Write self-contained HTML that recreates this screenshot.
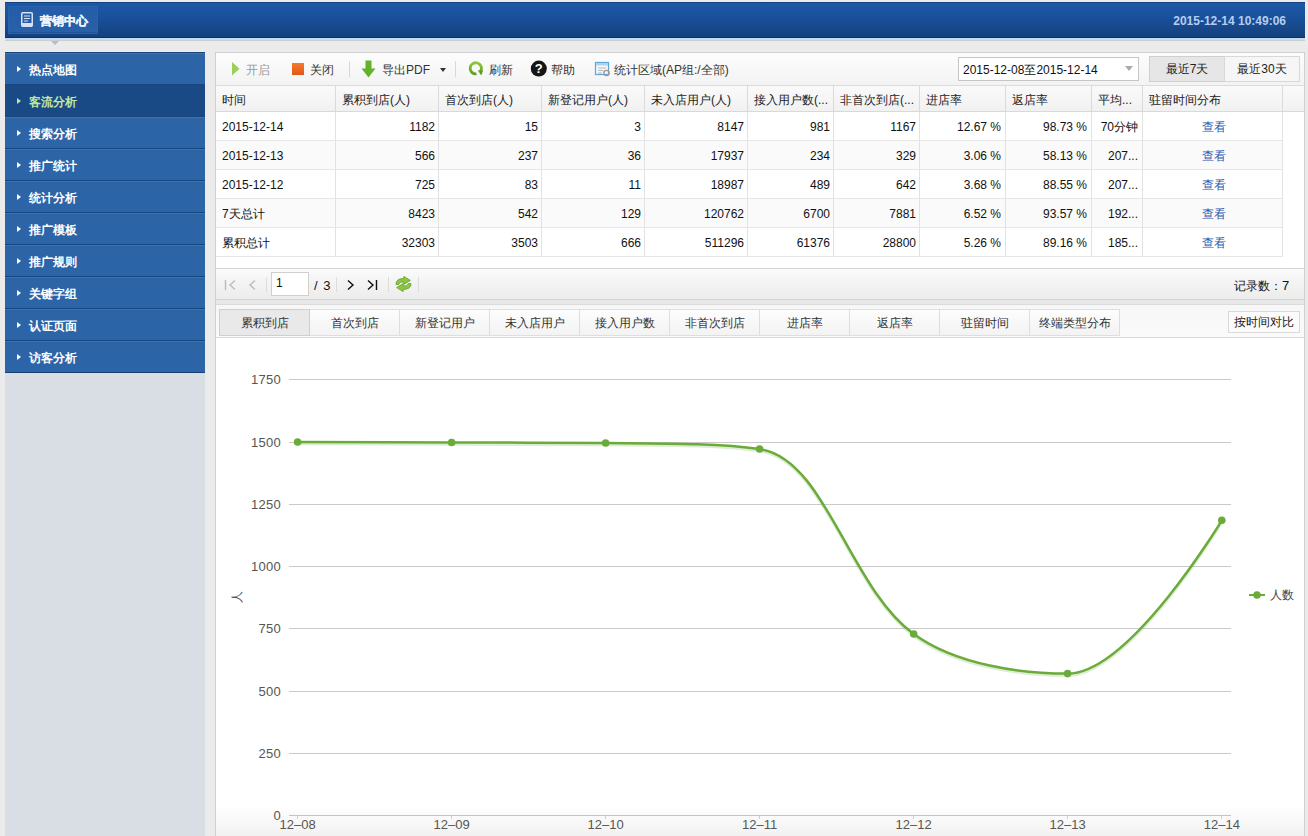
<!DOCTYPE html>
<html><head><meta charset="utf-8">
<style>
*{box-sizing:border-box;margin:0;padding:0}
html,body{width:1308px;height:836px;overflow:hidden;background:#ebebeb;font-family:"Liberation Sans",sans-serif;font-size:12px;color:#222}
.abs{position:absolute}
#hdr{left:5px;top:2px;width:1300px;height:36px;background:linear-gradient(#1c58a6,#1a519c 40%,#15427f 95%);border-top:1px solid #104280;border-bottom:1px solid #0e2f66}
#hdrline{left:5px;top:38px;width:1300px;height:3px;background:linear-gradient(#c6dbf0 0,#c6dbf0 1.5px,#b7c2c8 2px,#d8dcdf)}
#harr{left:51px;top:41px;width:0;height:0;border-top:4px solid #b5bcc4;border-left:4px solid transparent;border-right:4px solid transparent}
#logo{left:8px;top:6px;width:90px;height:28px;background:linear-gradient(#245ca8,#2a60a8);border:1px solid #2b62ad;box-shadow:inset 0 -1px 0 #1f5298}
#logo .t{position:absolute;left:31px;top:6px;color:#eef3fb;font-weight:bold;font-size:12px;letter-spacing:0px;-webkit-text-stroke:0.35px #eef3fb}
#time{right:22px;top:14px;color:#b5cdf0;font-weight:bold;font-size:12px}
#side{left:5px;top:52px;width:200px;height:784px;background:#d9dee5}
.nav{position:absolute;left:0;width:200px;height:32px;background:linear-gradient(#2d64a6,#2b65a8);border-top:1px solid #184680;box-shadow:inset 0 1px 0 #3b72b3;color:#fff;font-weight:bold;font-size:12px}
.nav .tri{position:absolute;left:12px;top:13px;width:0;height:0;border-left:4px solid #fff;border-top:3px solid transparent;border-bottom:3px solid transparent}
.nav span{position:absolute;left:24px;top:9px}
.nav.act{background:#1a4a86;color:#bfe6a2;box-shadow:none}
.nav.act .tri{border-left-color:#bfe6a2}
#panel{left:215px;top:52px;width:1090px;height:790px;background:#fff;border:1px solid #cfcfcf}

#tb{left:216px;top:53px;width:1088px;height:33px;background:linear-gradient(#fdfdfd,#f3f3f3);border-bottom:1px solid #dcdcdc}
.tbt{position:absolute;top:10px;font-size:12px;color:#333;white-space:nowrap}
.sep{position:absolute;width:1px;background:#d8d8d8}
#dd{left:958px;top:57px;width:181px;height:24px;border:1px solid #c6c6c6;background:#fff}
#dd span{position:absolute;left:4px;top:4px;color:#111}
#dd i{position:absolute;right:5px;top:8px;border-top:5px solid #aaa;border-left:4px solid transparent;border-right:4px solid transparent}
.btn{position:absolute;top:56px;height:26px;border:1px solid #d8d8d8;background:#f6f6f6;text-align:center;line-height:25px;color:#222}
#thd{left:216px;top:86px;width:1088px;height:26px;background:linear-gradient(#fafafa,#f1f1f1);border-bottom:1px solid #d9d9d9}
.th{position:absolute;top:0;height:25px;line-height:28px;padding-left:6px;border-right:1px solid #dadada;color:#222;white-space:nowrap;overflow:hidden}
.row{position:absolute;left:216px;width:1067px;height:29px;border-bottom:1px solid #e6e6e6}
.td{position:absolute;top:0;height:28px;line-height:31px;border-right:1px solid #e2e2e2;white-space:nowrap;text-align:right;padding-right:3px;color:#111}
.td.l{text-align:left;padding-left:6px}
.td.c{text-align:center;color:#2a58b0;padding-left:5px}
#pg{left:216px;top:268px;width:1088px;height:32px;background:linear-gradient(#fafafa,#ececec);border-top:1px solid #d6d6d6;border-bottom:1px solid #d4d4d4}
#tabs{left:216px;top:300px;width:1088px;height:38px;background:linear-gradient(#e8e8e8 0,#e8e8e8 4px,#dadada 4px,#dadada 5px,#f7f7f7 5px,#fafafa);border-bottom:1px solid #d8d8d8}
.tab{position:absolute;top:309px;width:90px;height:27px;border:1px solid #dedede;border-left:none;background:linear-gradient(#fdfdfd,#f3f3f3);text-align:center;line-height:26px;color:#333}
.tab.act{background:#e9e9e9;border-left:1px solid #cfcfcf;border-color:#cfcfcf}
</style></head><body>
<div id="hdr" class="abs"></div>
<div id="hdrline" class="abs"></div><div id="harr" class="abs"></div>
<div id="logo" class="abs"><svg class="abs" style="left:12px;top:5px" width="12" height="15" viewBox="0 0 12 15"><rect x="0.75" y="0.75" width="10.5" height="13.5" rx="1" fill="none" stroke="#d6e2f4" stroke-width="1.5"/><path d="M3 4h6M3 6.5h6M3 9h4" stroke="#d6e2f4" stroke-width="1.2"/><rect x="0.75" y="11" width="10.5" height="3.2" fill="#d6e2f4"/></svg><span class="t">营销中心</span></div>
<div id="time" class="abs">2015-12-14 10:49:06</div>
<div id="side" class="abs">
<div class="nav" style="top:0"><i class="tri"></i><span>热点地图</span></div>
<div class="nav act" style="top:32px"><i class="tri"></i><span>客流分析</span></div>
<div class="nav" style="top:64px"><i class="tri"></i><span>搜索分析</span></div>
<div class="nav" style="top:96px"><i class="tri"></i><span>推广统计</span></div>
<div class="nav" style="top:128px"><i class="tri"></i><span>统计分析</span></div>
<div class="nav" style="top:160px"><i class="tri"></i><span>推广模板</span></div>
<div class="nav" style="top:192px"><i class="tri"></i><span>推广规则</span></div>
<div class="nav" style="top:224px"><i class="tri"></i><span>关键字组</span></div>
<div class="nav" style="top:256px"><i class="tri"></i><span>认证页面</span></div>
<div class="nav" style="top:288px;height:33px;border-bottom:1px solid #1a3f72"><i class="tri"></i><span>访客分析</span></div>
</div>
<div id="panel" class="abs"></div>
<!--CONTENT-->
<div id="tb" class="abs"></div>

<svg class="abs" style="left:232px;top:62px" width="9" height="14"><path d="M0 0L7.5 6.8L0 13.6Z" fill="#9ccf5a"/></svg>
<span class="tbt abs" style="left:246px;top:62px;color:#999">开启</span>
<div class="abs" style="left:292px;top:63px;width:12px;height:12px;background:linear-gradient(#f47a2a,#e2561a)"></div>
<span class="tbt abs" style="left:310px;top:62px">关闭</span>
<div class="sep" style="left:349px;top:61px;height:16px"></div>
<svg class="abs" style="left:361px;top:60px" width="15" height="18"><path d="M4.5 0.5h6v8h4L7.5 17.5L0.5 8.5h4z" fill="#63b22a"/></svg>
<span class="tbt abs" style="left:382px;top:62px">导出PDF</span>
<div class="abs" style="left:440px;top:68px;border-top:4px solid #333;border-left:3px solid transparent;border-right:3px solid transparent"></div>
<div class="sep" style="left:455px;top:61px;height:16px"></div>
<svg class="abs" style="left:468px;top:61px" width="16" height="15" viewBox="0 0 16 15"><defs><linearGradient id="gr" x1="0" y1="0" x2="0" y2="1"><stop offset="0" stop-color="#8cc83e"/><stop offset="1" stop-color="#5c9f22"/></linearGradient></defs><path d="M12.6 10.2A5.6 5.6 0 1 0 8.5 12.9" fill="none" stroke="url(#gr)" stroke-width="2.8"/><path d="M9.8 9.3L15.2 9.6L13.2 14.6z" fill="#5c9f22"/></svg>
<span class="tbt abs" style="left:489px;top:62px">刷新</span>
<svg class="abs" style="left:530px;top:60px" width="18" height="18"><circle cx="8.8" cy="8.6" r="8" fill="#151515"/><text x="8.8" y="13.2" font-size="13" font-weight="bold" text-anchor="middle" fill="#fff" font-family="Liberation Sans">?</text></svg>
<span class="tbt abs" style="left:551px;top:62px">帮助</span>
<svg class="abs" style="left:594px;top:61px" width="17" height="16"><rect x="1.5" y="1.5" width="13" height="12" fill="#f4f8fb" stroke="#5ea5d8" stroke-width="1.2"/><rect x="2" y="2" width="12" height="2.5" fill="#a9d3f0"/><path d="M4 7h8M4 9.5h5M4 12h4" stroke="#b8b8b8" stroke-width="1"/><circle cx="12.5" cy="12" r="2.6" fill="none" stroke="#999" stroke-width="1.4"/></svg>
<span class="tbt abs" style="left:614px;top:62px">统计区域(AP组:/全部)</span>
<div id="dd" class="abs"><span>2015-12-08至2015-12-14</span><i></i></div>
<div class="btn" style="left:1149px;width:76px;background:#e6e6e6;border-color:#cfcfcf">最近7天</div>
<div class="btn" style="left:1224px;width:76px">最近30天</div>

<div id="thd" class="abs">
<div class="th" style="left:0px;width:120px">时间</div>
<div class="th" style="left:120px;width:103px">累积到店(人)</div>
<div class="th" style="left:223px;width:103px">首次到店(人)</div>
<div class="th" style="left:326px;width:103px">新登记用户(人)</div>
<div class="th" style="left:429px;width:103px">未入店用户(人)</div>
<div class="th" style="left:532px;width:86px">接入用户数(...</div>
<div class="th" style="left:618px;width:86px">非首次到店(...</div>
<div class="th" style="left:704px;width:86px">进店率</div>
<div class="th" style="left:790px;width:86px">返店率</div>
<div class="th" style="left:876px;width:51px">平均...</div>
<div class="th" style="left:927px;width:140px">驻留时间分布</div>
</div>
<div class="row" style="top:112px;background:#fff">
<div class="td l" style="left:0px;width:120px">2015-12-14</div>
<div class="td" style="left:120px;width:103px">1182</div>
<div class="td" style="left:223px;width:103px">15</div>
<div class="td" style="left:326px;width:103px">3</div>
<div class="td" style="left:429px;width:103px">8147</div>
<div class="td" style="left:532px;width:86px">981</div>
<div class="td" style="left:618px;width:86px">1167</div>
<div class="td" style="left:704px;width:86px;padding-right:4px">12.67 %</div>
<div class="td" style="left:790px;width:86px;padding-right:4px">98.73 %</div>
<div class="td" style="left:876px;width:51px;padding-right:4px">70分钟</div>
<div class="td c" style="left:927px;width:140px">查看</div>
</div>
<div class="row" style="top:141px;background:#fafafa">
<div class="td l" style="left:0px;width:120px">2015-12-13</div>
<div class="td" style="left:120px;width:103px">566</div>
<div class="td" style="left:223px;width:103px">237</div>
<div class="td" style="left:326px;width:103px">36</div>
<div class="td" style="left:429px;width:103px">17937</div>
<div class="td" style="left:532px;width:86px">234</div>
<div class="td" style="left:618px;width:86px">329</div>
<div class="td" style="left:704px;width:86px;padding-right:4px">3.06 %</div>
<div class="td" style="left:790px;width:86px;padding-right:4px">58.13 %</div>
<div class="td" style="left:876px;width:51px;padding-right:4px">207...</div>
<div class="td c" style="left:927px;width:140px">查看</div>
</div>
<div class="row" style="top:170px;background:#fff">
<div class="td l" style="left:0px;width:120px">2015-12-12</div>
<div class="td" style="left:120px;width:103px">725</div>
<div class="td" style="left:223px;width:103px">83</div>
<div class="td" style="left:326px;width:103px">11</div>
<div class="td" style="left:429px;width:103px">18987</div>
<div class="td" style="left:532px;width:86px">489</div>
<div class="td" style="left:618px;width:86px">642</div>
<div class="td" style="left:704px;width:86px;padding-right:4px">3.68 %</div>
<div class="td" style="left:790px;width:86px;padding-right:4px">88.55 %</div>
<div class="td" style="left:876px;width:51px;padding-right:4px">207...</div>
<div class="td c" style="left:927px;width:140px">查看</div>
</div>
<div class="row" style="top:199px;background:#fafafa">
<div class="td l" style="left:0px;width:120px">7天总计</div>
<div class="td" style="left:120px;width:103px">8423</div>
<div class="td" style="left:223px;width:103px">542</div>
<div class="td" style="left:326px;width:103px">129</div>
<div class="td" style="left:429px;width:103px">120762</div>
<div class="td" style="left:532px;width:86px">6700</div>
<div class="td" style="left:618px;width:86px">7881</div>
<div class="td" style="left:704px;width:86px;padding-right:4px">6.52 %</div>
<div class="td" style="left:790px;width:86px;padding-right:4px">93.57 %</div>
<div class="td" style="left:876px;width:51px;padding-right:4px">192...</div>
<div class="td c" style="left:927px;width:140px">查看</div>
</div>
<div class="row" style="top:228px;background:#fff">
<div class="td l" style="left:0px;width:120px">累积总计</div>
<div class="td" style="left:120px;width:103px">32303</div>
<div class="td" style="left:223px;width:103px">3503</div>
<div class="td" style="left:326px;width:103px">666</div>
<div class="td" style="left:429px;width:103px">511296</div>
<div class="td" style="left:532px;width:86px">61376</div>
<div class="td" style="left:618px;width:86px">28800</div>
<div class="td" style="left:704px;width:86px;padding-right:4px">5.26 %</div>
<div class="td" style="left:790px;width:86px;padding-right:4px">89.16 %</div>
<div class="td" style="left:876px;width:51px;padding-right:4px">185...</div>
<div class="td c" style="left:927px;width:140px">查看</div>
</div>

<div id="pg" class="abs"></div>
<svg class="abs" style="left:224px;top:279px" width="14" height="12"><path d="M1.5 1v10M11 1.5L6 6l5 4.5" fill="none" stroke="#bbb" stroke-width="1.4"/></svg>
<svg class="abs" style="left:246px;top:279px" width="12" height="12"><path d="M9 1.5L4 6l5 4.5" fill="none" stroke="#bbb" stroke-width="1.4"/></svg>
<div class="sep" style="left:266px;top:277px;height:15px;background:#dcdcdc"></div>
<div class="abs" style="left:271px;top:272px;width:38px;height:24px;background:#fff;border:1px solid #cfcfcf"><span class="abs" style="left:4px;top:3px;color:#111">1</span></div>
<span class="abs" style="left:314px;top:278px;color:#111;font-size:13px;word-spacing:2px">/ 3</span>
<div class="sep" style="left:336px;top:277px;height:15px;background:#dcdcdc"></div>
<svg class="abs" style="left:345px;top:279px" width="12" height="12"><path d="M3 1.5L8 6l-5 4.5" fill="none" stroke="#111" stroke-width="1.4"/></svg>
<svg class="abs" style="left:366px;top:279px" width="14" height="12"><path d="M2 1.5L7 6l-5 4.5M10.5 1v10" fill="none" stroke="#111" stroke-width="1.4"/></svg>
<div class="sep" style="left:388px;top:277px;height:15px;background:#dcdcdc"></div>
<svg class="abs" style="left:395px;top:276px" width="17" height="16" viewBox="0 0 17 16"><g fill="#8cc63f" stroke="#62a12a" stroke-width="0.8" stroke-linejoin="round"><path d="M1 8.5C1 4.5 3.5 2.6 8.8 2.6V0.4L15.4 4.4L8.8 8.4V6C5.8 6 4.4 6.6 3.8 8.5Z"/><path d="M16 7.5C16 11.5 13.5 13.4 8.2 13.4V15.6L1.6 11.6L8.2 7.6V10C11.2 10 12.6 9.4 13.2 7.5Z"/></g></svg>
<div class="sep" style="left:418px;top:277px;height:15px;background:#dcdcdc"></div>
<span class="abs" style="left:1234px;top:278px;color:#111">记录数：<b style="font-size:13px;font-weight:normal">7</b></span>

<div id="tabs" class="abs"></div>
<div class="tab act" style="left:219px;width:91px">累积到店</div>
<div class="tab" style="left:310px;width:90px">首次到店</div>
<div class="tab" style="left:400px;width:90px">新登记用户</div>
<div class="tab" style="left:490px;width:90px">未入店用户</div>
<div class="tab" style="left:580px;width:90px">接入用户数</div>
<div class="tab" style="left:670px;width:90px">非首次到店</div>
<div class="tab" style="left:760px;width:90px">进店率</div>
<div class="tab" style="left:850px;width:90px">返店率</div>
<div class="tab" style="left:940px;width:90px">驻留时间</div>
<div class="tab" style="left:1030px;width:90px">终端类型分布</div>
<div class="btn" style="left:1228px;top:311px;width:72px;height:22px;line-height:21px;background:#fbfbfb">按时间对比</div>
<div class="abs" style="left:216px;top:806px;width:1088px;height:30px;background:linear-gradient(rgba(255,255,255,0),#f1f1f1)"></div>
<svg class="abs" style="left:0;top:0" width="1308" height="836">
<text x="281" y="820.0" text-anchor="end" font-size="13" letter-spacing="0.3" fill="#555" font-family="Liberation Sans">0</text>
<line x1="289" y1="753.5" x2="1231" y2="753.5" stroke="#c9c9c9" stroke-width="1"/>
<text x="281" y="758.0" text-anchor="end" font-size="13" letter-spacing="0.3" fill="#555" font-family="Liberation Sans">250</text>
<line x1="289" y1="691.5" x2="1231" y2="691.5" stroke="#c9c9c9" stroke-width="1"/>
<text x="281" y="696.0" text-anchor="end" font-size="13" letter-spacing="0.3" fill="#555" font-family="Liberation Sans">500</text>
<line x1="289" y1="628.5" x2="1231" y2="628.5" stroke="#c9c9c9" stroke-width="1"/>
<text x="281" y="633.0" text-anchor="end" font-size="13" letter-spacing="0.3" fill="#555" font-family="Liberation Sans">750</text>
<line x1="289" y1="566.5" x2="1231" y2="566.5" stroke="#c9c9c9" stroke-width="1"/>
<text x="281" y="571.0" text-anchor="end" font-size="13" letter-spacing="0.3" fill="#555" font-family="Liberation Sans">1000</text>
<line x1="289" y1="504.5" x2="1231" y2="504.5" stroke="#c9c9c9" stroke-width="1"/>
<text x="281" y="509.0" text-anchor="end" font-size="13" letter-spacing="0.3" fill="#555" font-family="Liberation Sans">1250</text>
<line x1="289" y1="442.5" x2="1231" y2="442.5" stroke="#c9c9c9" stroke-width="1"/>
<text x="281" y="447.0" text-anchor="end" font-size="13" letter-spacing="0.3" fill="#555" font-family="Liberation Sans">1500</text>
<line x1="289" y1="379.5" x2="1231" y2="379.5" stroke="#c9c9c9" stroke-width="1"/>
<text x="281" y="384.0" text-anchor="end" font-size="13" letter-spacing="0.3" fill="#555" font-family="Liberation Sans">1750</text>
<line x1="289" y1="815.5" x2="1231" y2="815.5" stroke="#b9c4d6" stroke-width="1"/>
<line x1="297.5" y1="816" x2="297.5" y2="819" stroke="#c9d0dc" stroke-width="1"/>
<text x="297.6" y="829" text-anchor="middle" font-size="13" fill="#555" font-family="Liberation Sans">12–08</text>
<line x1="451.5" y1="816" x2="451.5" y2="819" stroke="#c9d0dc" stroke-width="1"/>
<text x="451.6" y="829" text-anchor="middle" font-size="13" fill="#555" font-family="Liberation Sans">12–09</text>
<line x1="605.5" y1="816" x2="605.5" y2="819" stroke="#c9d0dc" stroke-width="1"/>
<text x="605.6" y="829" text-anchor="middle" font-size="13" fill="#555" font-family="Liberation Sans">12–10</text>
<line x1="759.5" y1="816" x2="759.5" y2="819" stroke="#c9d0dc" stroke-width="1"/>
<text x="759.6" y="829" text-anchor="middle" font-size="13" fill="#555" font-family="Liberation Sans">12–11</text>
<line x1="913.5" y1="816" x2="913.5" y2="819" stroke="#c9d0dc" stroke-width="1"/>
<text x="913.7" y="829" text-anchor="middle" font-size="13" fill="#555" font-family="Liberation Sans">12–12</text>
<line x1="1067.5" y1="816" x2="1067.5" y2="819" stroke="#c9d0dc" stroke-width="1"/>
<text x="1067.6" y="829" text-anchor="middle" font-size="13" fill="#555" font-family="Liberation Sans">12–13</text>
<line x1="1221.5" y1="816" x2="1221.5" y2="819" stroke="#c9d0dc" stroke-width="1"/>
<text x="1221.8" y="829" text-anchor="middle" font-size="13" fill="#555" font-family="Liberation Sans">12–14</text>
<path d="M297.6,442.0 C297.6,442.0 397.7,442.3 451.6,442.5 C505.5,442.7 551.7,442.5 605.6,443.0 C659.5,443.5 717.5,443.0 759.6,449.0 C825.3,458.4 848.8,586.6 913.7,634.0 C956.6,665.3 1022.1,673.6 1067.6,673.6 C1129.9,673.6 1221.8,520.3 1221.8,520.3" fill="none" stroke="rgba(110,170,60,0.22)" stroke-width="3" transform="translate(0,1.8)"/>
<path d="M297.6,442.0 C297.6,442.0 397.7,442.3 451.6,442.5 C505.5,442.7 551.7,442.5 605.6,443.0 C659.5,443.5 717.5,443.0 759.6,449.0 C825.3,458.4 848.8,586.6 913.7,634.0 C956.6,665.3 1022.1,673.6 1067.6,673.6 C1129.9,673.6 1221.8,520.3 1221.8,520.3" fill="none" stroke="#6aab39" stroke-width="2.5"/>
<circle cx="297.6" cy="442" r="3.8" fill="#6aab39"/>
<circle cx="451.6" cy="442.5" r="3.8" fill="#6aab39"/>
<circle cx="605.6" cy="443" r="3.8" fill="#6aab39"/>
<circle cx="759.6" cy="449" r="3.8" fill="#6aab39"/>
<circle cx="913.7" cy="634" r="3.8" fill="#6aab39"/>
<circle cx="1067.6" cy="673.6" r="3.8" fill="#6aab39"/>
<circle cx="1221.8" cy="520.3" r="3.8" fill="#6aab39"/>
<text x="0" y="0" transform="translate(241,596.5) rotate(-90)" text-anchor="middle" font-size="11.5" fill="#555" font-family="Liberation Sans">人</text>
<line x1="1249" y1="595" x2="1265" y2="595" stroke="#6aab39" stroke-width="2"/><circle cx="1257" cy="595" r="3.8" fill="#6aab39"/>
<text x="1270" y="599" font-size="12" fill="#444" font-family="Liberation Sans">人数</text>
</svg>
<!--/CONTENT-->
</body></html>
